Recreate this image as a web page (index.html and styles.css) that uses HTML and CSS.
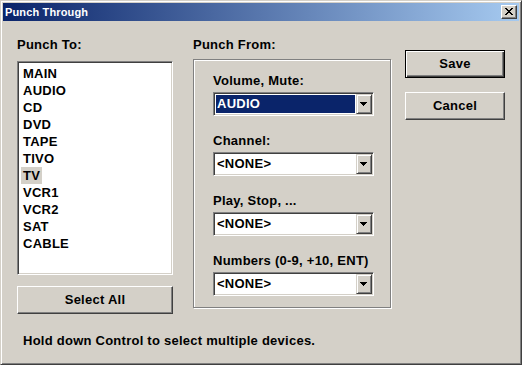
FILE: index.html
```html
<!DOCTYPE html>
<html>
<head>
<meta charset="utf-8">
<title>Punch Through</title>
<link rel="stylesheet" href="styles.css">
</head>
<body>
<div class="window">
  <div class="titlebar">
    <span class="title">Punch Through</span>
    <span class="close">
      <svg width="8" height="7" viewBox="0 0 8 7" shape-rendering="crispEdges">
        <path d="M0 0h2v1h-2zM6 0h2v1h-2zM1 1h2v1h-2zM5 1h2v1h-2zM2 2h4v1h-4zM3 3h2v1h-2zM2 4h4v1h-4zM1 5h2v1h-2zM5 5h2v1h-2zM0 6h2v1h-2zM6 6h2v1h-2z" fill="#000"/>
      </svg>
    </span>
  </div>
  <div class="client">
    <div class="columns">
      <div class="col col-left">
        <div class="label">Punch To:</div>
        <ul class="listbox">
          <li><span>MAIN</span></li>
          <li><span>AUDIO</span></li>
          <li><span>CD</span></li>
          <li><span>DVD</span></li>
          <li><span>TAPE</span></li>
          <li><span>TIVO</span></li>
          <li><span class="sel">TV</span></li>
          <li><span>VCR1</span></li>
          <li><span>VCR2</span></li>
          <li><span>SAT</span></li>
          <li><span>CABLE</span></li>
        </ul>
        <div class="btn btn-wide">Select All</div>
      </div>
      <div class="col col-mid">
        <div class="label">Punch From:</div>
        <div class="group">
          <div class="field">
            <div class="label">Volume, Mute:</div>
            <div class="combo"><span class="value selected">AUDIO</span><span class="drop"><svg width="7" height="4" viewBox="0 0 7 4" shape-rendering="crispEdges"><path d="M0 0h7v1h-7zM1 1h5v1h-5zM2 2h3v1h-3zM3 3h1v1h-1z" fill="#000"/></svg></span></div>
          </div>
          <div class="field">
            <div class="label">Channel:</div>
            <div class="combo"><span class="value">&lt;NONE&gt;</span><span class="drop"><svg width="7" height="4" viewBox="0 0 7 4" shape-rendering="crispEdges"><path d="M0 0h7v1h-7zM1 1h5v1h-5zM2 2h3v1h-3zM3 3h1v1h-1z" fill="#000"/></svg></span></div>
          </div>
          <div class="field">
            <div class="label">Play, Stop, ...</div>
            <div class="combo"><span class="value">&lt;NONE&gt;</span><span class="drop"><svg width="7" height="4" viewBox="0 0 7 4" shape-rendering="crispEdges"><path d="M0 0h7v1h-7zM1 1h5v1h-5zM2 2h3v1h-3zM3 3h1v1h-1z" fill="#000"/></svg></span></div>
          </div>
          <div class="field">
            <div class="label">Numbers (0-9, +10, ENT)</div>
            <div class="combo"><span class="value">&lt;NONE&gt;</span><span class="drop"><svg width="7" height="4" viewBox="0 0 7 4" shape-rendering="crispEdges"><path d="M0 0h7v1h-7zM1 1h5v1h-5zM2 2h3v1h-3zM3 3h1v1h-1z" fill="#000"/></svg></span></div>
          </div>
        </div>
      </div>
      <div class="col col-right">
        <div class="btn btn-default">Save</div>
        <div class="btn">Cancel</div>
      </div>
    </div>
    <div class="hint">Hold down Control to select multiple devices.</div>
  </div>
</div>
</body>
</html>
```

FILE: styles.css
```css
* { box-sizing: border-box; }
html, body { margin: 0; padding: 0; background: #d4d0c8; }
body {
  font-family: "Liberation Sans", Arial, sans-serif;
  font-weight: bold;
  font-size: 13px;
  letter-spacing: 0.25px;
  color: #000;
}
.window {
  width: 522px;
  height: 365px;
  background: #d4d0c8;
  border: 1px solid;
  border-color: #d4d0c8 #404040 #404040 #d4d0c8;
  box-shadow: inset 1px 1px 0 #fff, inset -1px -1px 0 #808080;
  padding: 2px;
  display: flex;
  flex-direction: column;
}
.titlebar {
  height: 18px;
  background: linear-gradient(to right, #0a246a, #a6caf0);
  display: flex;
  align-items: center;
  justify-content: space-between;
  padding: 0 2px;
}
.title {
  color: #fff;
  font-size: 11px;
  letter-spacing: 0.15px;
  line-height: 18px;
}
.close {
  width: 16px;
  height: 14px;
  background: #d4d0c8;
  border: 1px solid;
  border-color: #fff #404040 #404040 #fff;
  box-shadow: inset -1px -1px 0 #808080;
  display: flex;
  align-items: center;
  justify-content: center;
  padding: 0 1px 1px 0;
}
.close svg { display: block; }
.client {
  flex: 1;
  padding: 16px 0 0 14px;
}
.columns {
  display: flex;
  align-items: flex-start;
}
.col-left { width: 156px; }
.col-mid { width: 199px; margin-left: 20px; }
.col-right {
  width: 100px;
  margin-left: 13px;
  padding-top: 13px;
  display: flex;
  flex-direction: column;
  gap: 14px;
}
.label {
  line-height: 16px;
  height: 16px;
  white-space: nowrap;
}
.listbox {
  list-style: none;
  margin: 8px 0 0 0;
  height: 214px;
  background: #fff;
  border: 1px solid;
  border-color: #808080 #fff #fff #808080;
  box-shadow: inset 1px 1px 0 #404040, inset -1px -1px 0 #d4d0c8;
  padding: 3px 2px 0 3px;
}
.listbox li {
  line-height: 17px;
  height: 17px;
}
.listbox li span {
  display: inline-block;
  padding: 0 2px;
  height: 17px;
}
.listbox li span.sel { background: #d4d0c8; }
.btn {
  height: 28px;
  display: flex;
  align-items: center;
  justify-content: center;
  background: #d4d0c8;
  border: 1px solid;
  border-color: #fff #404040 #404040 #fff;
  box-shadow: inset -1px -1px 0 #808080;
  padding-bottom: 1px;
}
.btn-wide { margin-top: 11px; }
.btn-default {
  border: 1px solid #000;
  box-shadow: inset 1px 1px 0 #fff, inset -1px -1px 0 #404040, inset -2px -2px 0 #808080;
}
.group {
  margin-top: 6px;
  width: 198px;
  height: 249px;
  border: 1px solid #808080;
  box-shadow: inset 1px 1px 0 #fff, 1px 1px 0 #fff;
  padding: 13px 0 0 19px;
  display: flex;
  flex-direction: column;
  gap: 17px;
}
.field { display: flex; flex-direction: column; gap: 3px; }
.combo {
  width: 161px;
  height: 24px;
  background: #fff;
  border: 1px solid;
  border-color: #808080 #fff #fff #808080;
  box-shadow: inset 1px 1px 0 #404040, inset -1px -1px 0 #d4d0c8;
  padding: 1px;
  display: flex;
}
.value {
  flex: 1;
  margin: 1px;
  padding-left: 1px;
  line-height: 18px;
  height: 18px;
}
.value.selected { background: #0a246a; color: #fff; }
.drop {
  width: 16px;
  height: 20px;
  background: #d4d0c8;
  border: 1px solid;
  border-color: #d4d0c8 #404040 #404040 #d4d0c8;
  box-shadow: inset 1px 1px 0 #fff, inset -1px -1px 0 #808080;
  display: flex;
  align-items: center;
  justify-content: center;
  padding: 0 1px 0 0;
}
.drop svg { display: block; }
.hint {
  margin-top: 19px;
  padding-left: 6px;
  line-height: 16px;
  white-space: nowrap;
}
```
